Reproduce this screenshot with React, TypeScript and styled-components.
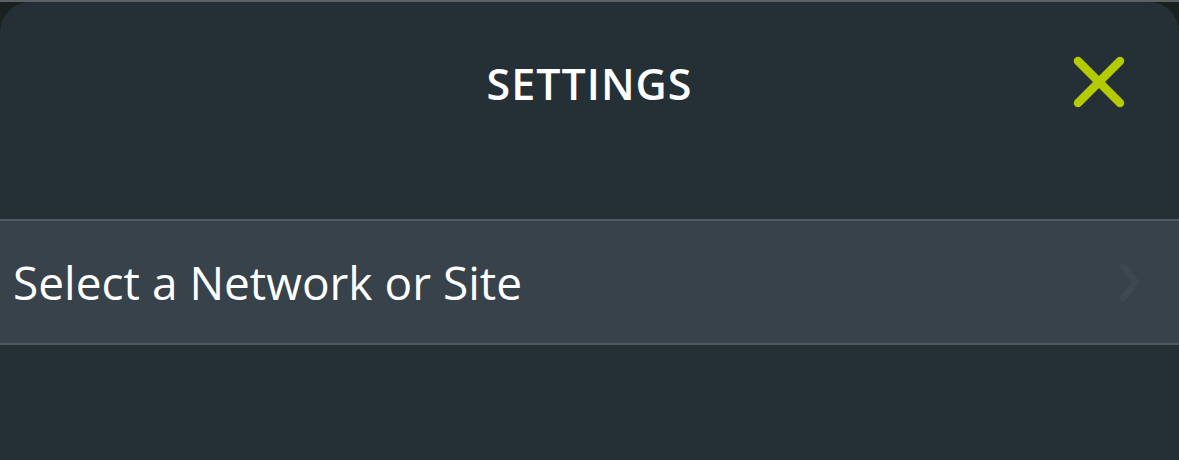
import React from "react";
import styled, { createGlobalStyle } from "styled-components";

const Global = createGlobalStyle`
  html, body { margin: 0; padding: 0; background: #19221f; }
  body { font-family: "Open Sans", "Noto Sans", sans-serif; }
`;

const Screen = styled.div`
  width: 1179px;
  height: 460px;
  display: flex;
  flex-direction: column;
  overflow: hidden;
  background: #19221f;
`;

const TopStrip = styled.div`
  height: 2px;
  background: #5b6165;
  flex-shrink: 0;
`;

const Panel = styled.div`
  flex: 1;
  background: #242f36;
  border-radius: 30px 30px 0 0;
  display: flex;
  flex-direction: column;
`;

const Header = styled.header`
  height: 162px;
  display: flex;
  align-items: center;
  justify-content: center;
  position: relative;
`;

const Title = styled.h1`
  margin: 0;
  color: #ffffff;
  font-size: 43px;
  font-weight: 600;
  letter-spacing: 1px;
`;

const CloseButton = styled.button`
  position: absolute;
  right: 52px;
  top: 50%;
  transform: translateY(-50%);
  width: 56px;
  height: 56px;
  padding: 0;
  border: 0;
  background: transparent;
  display: flex;
  align-items: center;
  justify-content: center;
  cursor: pointer;
`;

const List = styled.ul`
  list-style: none;
  margin: 55px 0 0;
  padding: 0;
`;

const Row = styled.li`
  height: 122px;
  display: flex;
  align-items: center;
  justify-content: space-between;
  padding: 0 37px 0 13px;
  background: #37424a;
  border-top: 2px solid #4e5962;
  border-bottom: 2px solid #4e5962;
`;

const RowLabel = styled.span`
  color: #ffffff;
  font-size: 46px;
  font-weight: 400;
`;

export default function App() {
  return (
    <>
      <Global />
      <Screen>
        <TopStrip />
        <Panel>
          <Header>
            <Title>SETTINGS</Title>
            <CloseButton aria-label="Close">
              <svg width="56" height="56" viewBox="0 0 56 56">
                <path
                  d="M7 6 L49 48 M49 6 L7 48"
                  stroke="#b3cb00"
                  strokeWidth="8.5"
                  strokeLinecap="round"
                />
              </svg>
            </CloseButton>
          </Header>
          <List>
            <Row>
              <RowLabel>Select a Network or Site</RowLabel>
              <svg width="24" height="40" viewBox="0 0 24 40">
                <path
                  d="M5 4 L18 20 L5 36"
                  stroke="#3e4850"
                  strokeWidth="6"
                  fill="none"
                  strokeLinecap="round"
                  strokeLinejoin="round"
                />
              </svg>
            </Row>
          </List>
        </Panel>
      </Screen>
    </>
  );
}
